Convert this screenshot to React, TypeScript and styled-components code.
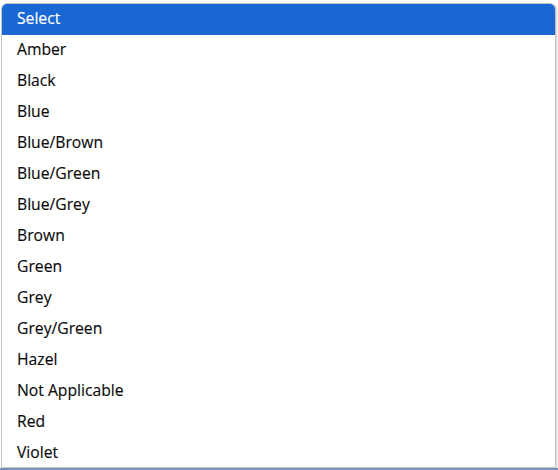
import React from 'react';
import styled, { createGlobalStyle } from 'styled-components';

const GlobalStyle = createGlobalStyle`
  html, body {
    margin: 0;
    padding: 0;
    background: #ffffff;
  }
  body {
    font-family: 'Open Sans', 'Noto Sans', Arial, sans-serif;
  }
`;

const Page = styled.div`
  width: 558px;
  height: 470px;
  display: flex;
  flex-direction: column;
  background: #ffffff;
  overflow: hidden;
`;

const Popup = styled.div`
  margin: 3px 2px 0 1px;
  height: 465px;
  display: flex;
  flex-direction: column;
  background: #ffffff;
  border: 1px solid #c4c4c4;
  border-radius: 6px 6px 0 0;
  box-shadow: 1px 1px 2px rgba(0, 0, 0, 0.18);
  overflow: hidden;
`;

const Option = styled.div<{ $active?: boolean }>`
  height: 31px;
  flex: 0 0 31px;
  box-sizing: border-box;
  display: flex;
  align-items: center;
  padding: 0 0 3px 15px;
  font-size: 15.7px;
  color: ${({ $active }) => ($active ? '#ffffff' : '#0a0a0a')};
  background: ${({ $active }) => ($active ? '#1967d2' : 'transparent')};
  -webkit-text-stroke: ${({ $active }) => ($active ? '0.15px #ffffff' : '0.15px #0a0a0a')};
`;

const Underline = styled.div`
  flex: 1;
  border-top: 2px solid #7593b6;
`;

const options = [
  'Amber',
  'Black',
  'Blue',
  'Blue/Brown',
  'Blue/Green',
  'Blue/Grey',
  'Brown',
  'Green',
  'Grey',
  'Grey/Green',
  'Hazel',
  'Not Applicable',
  'Red',
  'Violet',
];

export default function App() {
  return (
    <>
      <GlobalStyle />
      <Page>
        <Popup>
          <Option $active>Select</Option>
          {options.map((o) => (
            <Option key={o}>{o}</Option>
          ))}
        </Popup>
        <Underline />
      </Page>
    </>
  );
}
